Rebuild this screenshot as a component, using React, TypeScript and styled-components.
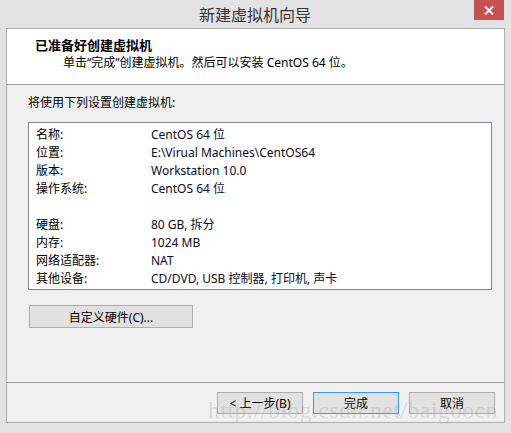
import React from 'react';
import styled, { createGlobalStyle } from 'styled-components';

type Row = {
    label: string;
    value: string;
}

const settings: (Row | null)[] = [
    {label: '名称:', value: 'CentOS 64 位'},
    {label: '位置:', value: 'E:\\Virual Machines\\CentOS64'},
    {label: '版本:', value: 'Workstation 10.0'},
    {label: '操作系统:', value: 'CentOS 64 位'},
    null,
    {label: '硬盘:', value: '80 GB, 拆分'},
    {label: '内存:', value: '1024 MB'},
    {label: '网络适配器:', value: 'NAT'},
    {label: '其他设备:', value: 'CD/DVD, USB 控制器, 打印机, 声卡'},
];

const App = () => {
    return (
        <>
            <GlobalStyle/>
            <Window>
                <TitleBar>
                    <Title>新建虚拟机向导</Title>
                    <CloseButton>
                        <svg width="10" height="9" viewBox="0 0 10 9">
                            <path d="M1 0.5 L9 8.5 M9 0.5 L1 8.5" stroke="#fff" strokeWidth="2"/>
                        </svg>
                    </CloseButton>
                </TitleBar>
                <Client>
                    <Header>
                        <HeaderTitle>已准备好创建虚拟机</HeaderTitle>
                        <HeaderText>单击“完成”创建虚拟机。然后可以安装 CentOS 64 位。</HeaderText>
                    </Header>
                    <Content>
                        <Intro>将使用下列设置创建虚拟机:</Intro>
                        <SettingsBox>
                            {settings.map((row, i) => row ? (
                                <SettingRow key={i}>
                                    <SettingLabel>{row.label}</SettingLabel>
                                    <SettingValue>{row.value}</SettingValue>
                                </SettingRow>
                            ) : (
                                <SettingRow key={i}/>
                            ))}
                        </SettingsBox>
                        <Button width={164} height={23}>自定义硬件(C)...</Button>
                    </Content>
                    <Footer>
                        <Button>&lt; 上一步(B)</Button>
                        <Button primary>完成</Button>
                        <Button>取消</Button>
                    </Footer>
                    {/* blog watermark stamped over the screenshot */}
                    <Watermark>http://blog.csdn.net/baigoocn</Watermark>
                </Client>
            </Window>
        </>
    );
}

const GlobalStyle = createGlobalStyle`
  html, body {
    margin: 0;
    padding: 0;
    width: 511px;
    height: 433px;
    overflow: hidden;
  }
  body {
    font-family: "Noto Sans", "Noto Sans CJK SC", sans-serif;
    font-size: 12px;
    color: #000;
  }
`;

const Window = styled.div`
  width: 511px;
  height: 433px;
  box-sizing: border-box;
  background-color: #e3e3e3;
  padding: 0 6px 10px 6px;
  display: flex;
  flex-direction: column;
`;

const TitleBar = styled.div`
  height: 28px;
  display: grid;
  grid-template-columns: 30px 1fr 30px;
  padding-right: 1px;
`;

const Title = styled.div`
  grid-column: 2;
  justify-self: center;
  align-self: center;
  font-family: "Noto Sans CJK SC", sans-serif;
  font-size: 16px;
  color: #333;
  line-height: 28px;
  margin-top: -1px;
`;

const CloseButton = styled.div`
  grid-column: 3;
  align-self: start;
  width: 30px;
  height: 20px;
  background-color: #c75050;
  display: flex;
  align-items: center;
  justify-content: center;
`;

const Client = styled.div`
  position: relative;
  flex: 1;
  border: 1px solid #acacac;
  background-color: #f0f0f0;
  display: flex;
  flex-direction: column;
`;

const Header = styled.div`
  height: 56px;
  background-color: #fff;
  border-bottom: 1px solid #a0a0a0;
  padding: 7px 0 0 28px;
  box-sizing: border-box;
  display: flex;
  flex-direction: column;
`;

const HeaderTitle = styled.div`
  font-family: "Noto Sans CJK SC", sans-serif;
  font-weight: bold;
  font-size: 13px;
  line-height: 18px;
`;

const HeaderText = styled.div`
  font-size: 12px;
  line-height: 18px;
  padding-left: 28px;
`;

const Content = styled.div`
  flex: 1;
  display: flex;
  flex-direction: column;
  align-items: flex-start;
  padding: 9px 12px 0 21px;
  border-bottom: 1px solid #a0a0a0;
`;

const Intro = styled.div`
  line-height: 18px;
  margin-bottom: 10px;
`;

const SettingsBox = styled.div`
  align-self: stretch;
  background-color: #fff;
  border: 1px solid #828790;
  padding: 3px 0 1px 7px;
  display: flex;
  flex-direction: column;
  margin-bottom: 15px;
`;

const SettingRow = styled.div`
  height: 18px;
  line-height: 18px;
  display: flex;
`;

const SettingLabel = styled.div`
  width: 115px;
`;

const SettingValue = styled.div`
  color: #0a0a1e;
`;

const Button = styled.button<{primary?: boolean; width?: number; height?: number}>`
  width: ${({width}) => width || 86}px;
  height: ${({height}) => height || 22}px;
  box-sizing: border-box;
  border: 1px solid ${({primary}) => primary ? '#3399ff' : '#adadad'};
  background-color: #e1e1e1;
  font-family: "Noto Sans", "Noto Sans CJK SC", sans-serif;
  font-size: 12px;
  color: #000;
  padding: 0;
  margin-left: 1px;
  outline: none;
`;

const Footer = styled.div`
  height: 39px;
  box-sizing: border-box;
  display: flex;
  justify-content: flex-end;
  gap: 9px;
  padding: 9px 9px 0 0;
  align-items: flex-start;
`;

const Watermark = styled.div`
  position: absolute;
  left: 201px;
  top: 369px;
  font-family: "Liberation Serif", serif;
  font-size: 23px;
  color: rgba(160, 160, 160, 0.3);
  pointer-events: none;
  letter-spacing: 0.75px;
`;

export default App;
